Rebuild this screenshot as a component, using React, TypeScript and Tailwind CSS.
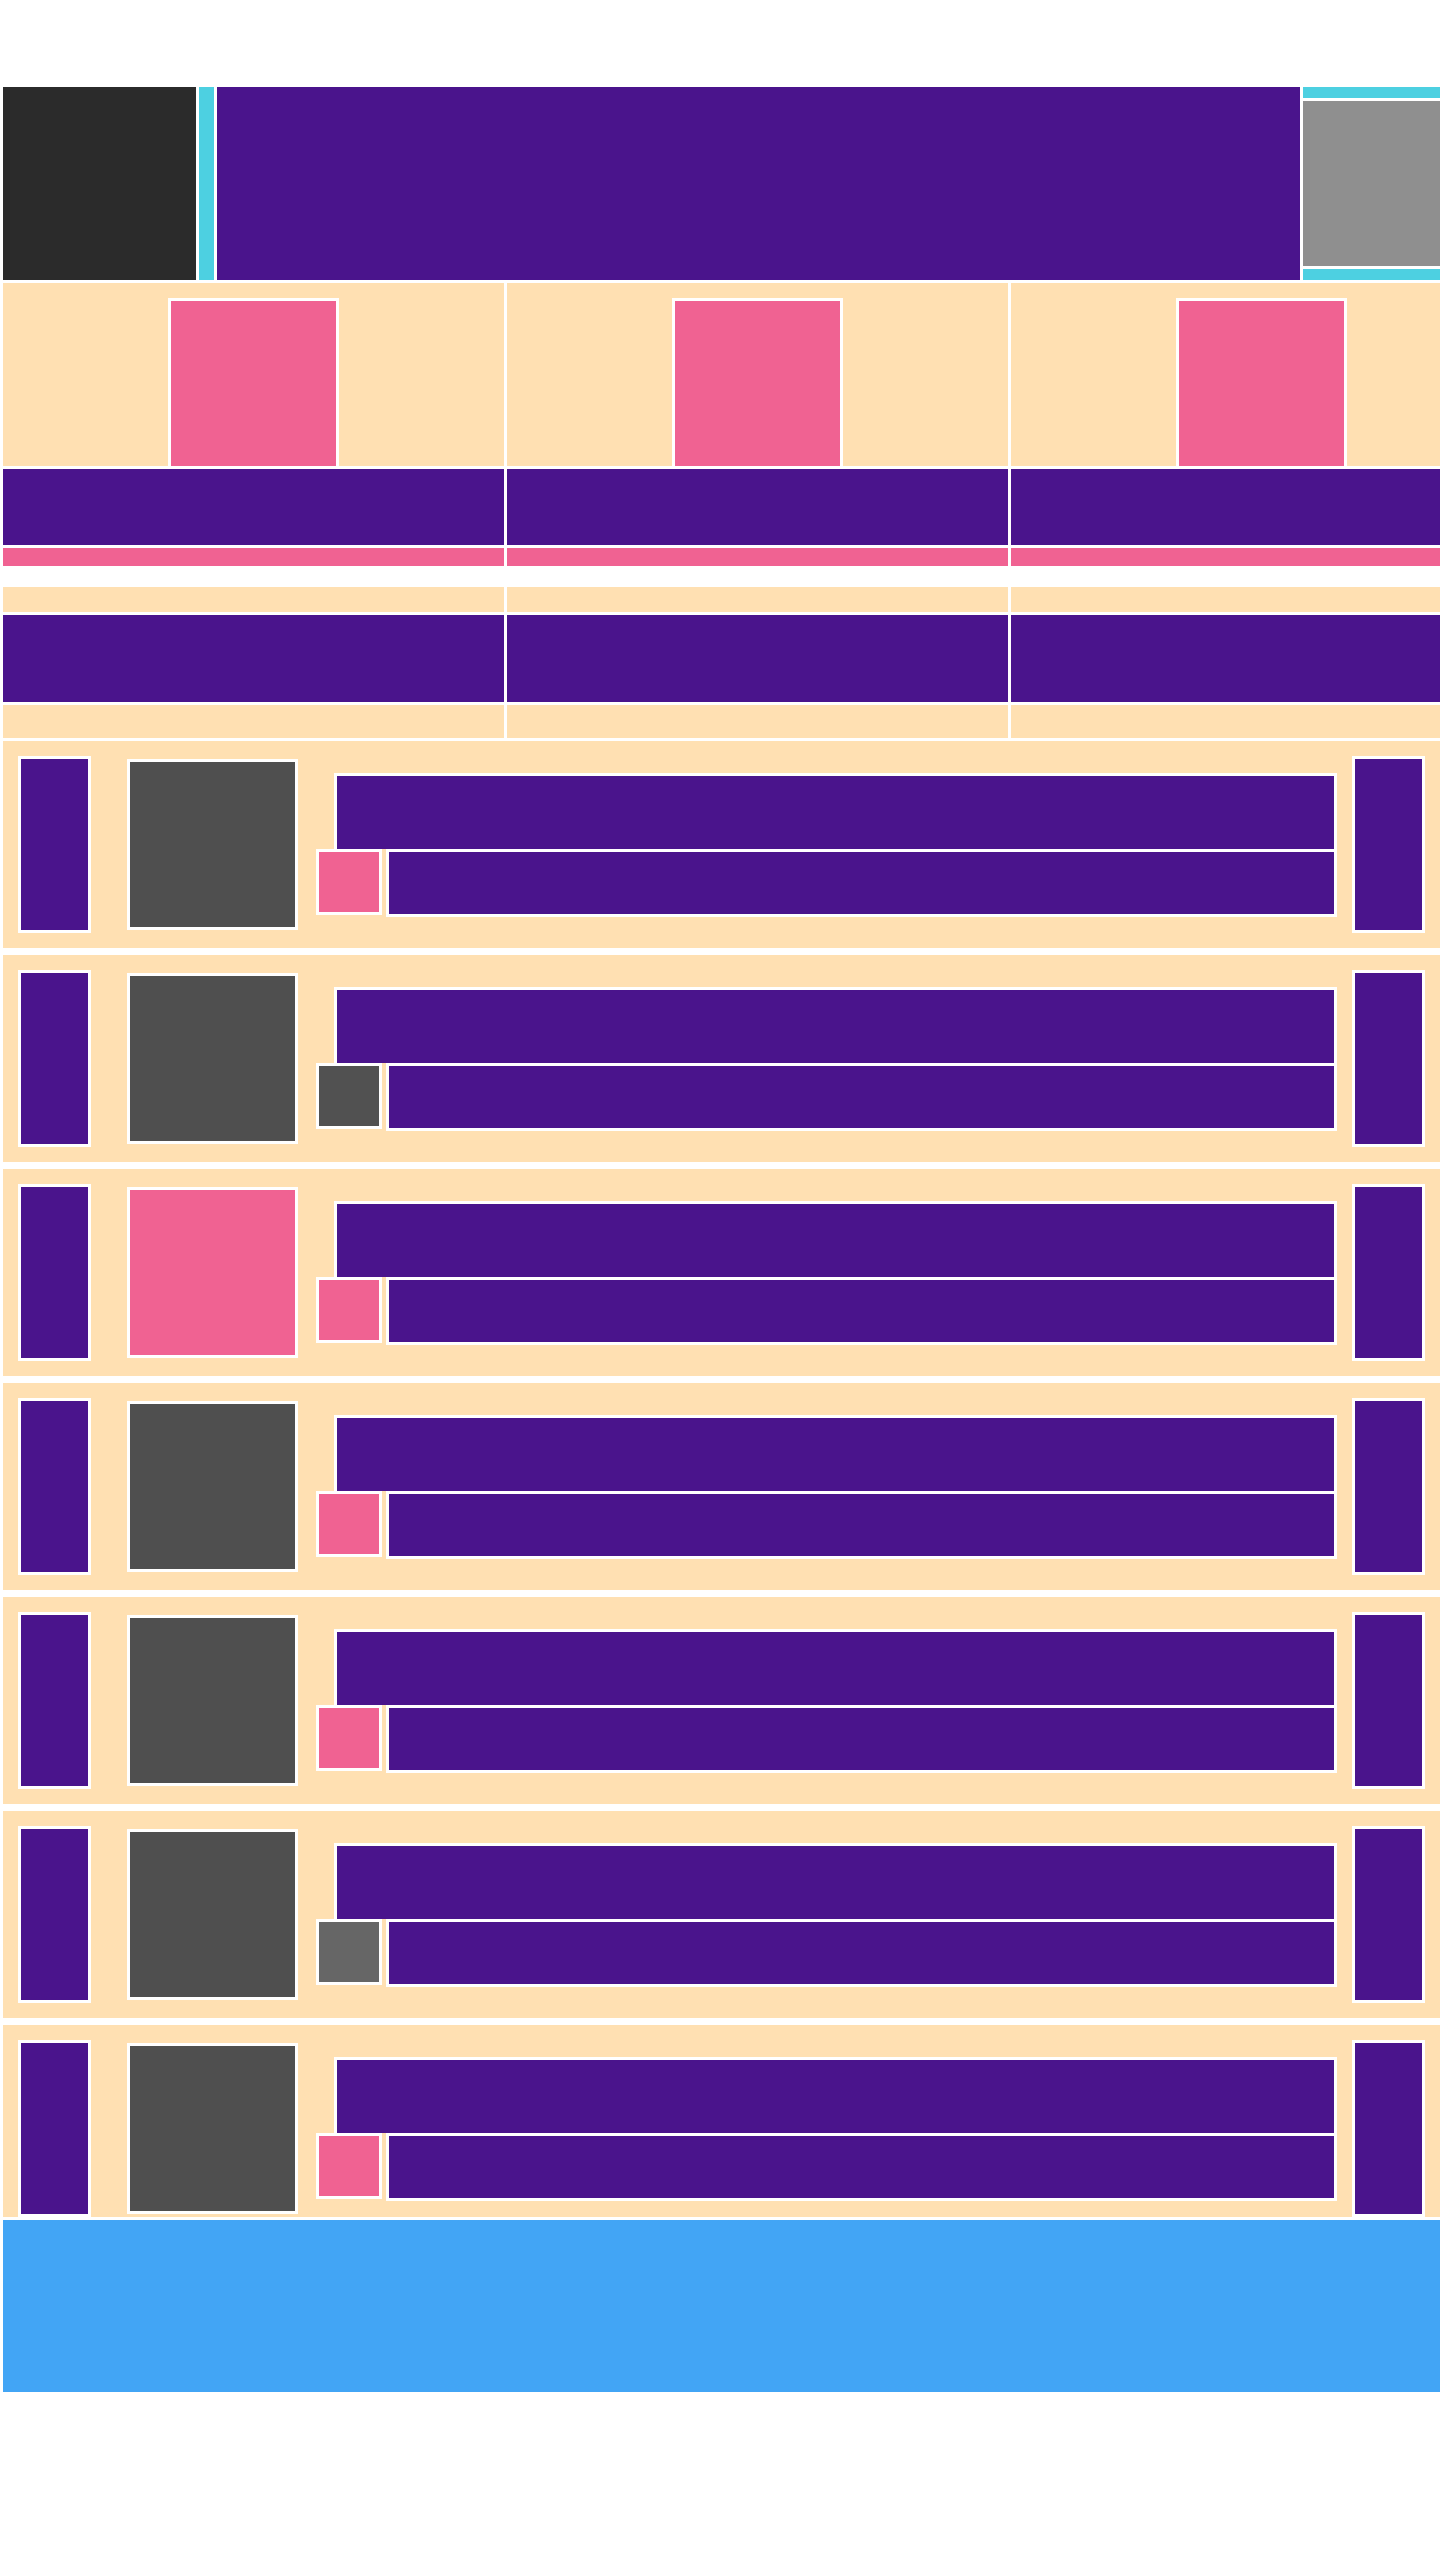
import React from 'react'

interface Item {
  image: string
  thumb: string
}

const items: Item[] = [
  { image: 'bg-[#4f4f4f]', thumb: 'bg-[#f06292]' },
  { image: 'bg-[#4f4f4f]', thumb: 'bg-[#515151]' },
  { image: 'bg-[#f06292]', thumb: 'bg-[#f06292]' },
  { image: 'bg-[#4f4f4f]', thumb: 'bg-[#f06292]' },
  { image: 'bg-[#4f4f4f]', thumb: 'bg-[#f06292]' },
  { image: 'bg-[#4f4f4f]', thumb: 'bg-[#666666]' },
  { image: 'bg-[#4f4f4f]', thumb: 'bg-[#f06292]' },
]

function FeatureColumn() {
  return (
    <div className="flex flex-col">
      {/* Image card */}
      <div className="h-[183px] bg-[#ffe0b2] pt-[15px] flex justify-center">
        <div className="w-[171px] h-[171px] shrink-0 border-[3px] border-white bg-[#f06292]"></div>
      </div>
      <div className="mt-[3px] h-[76px] bg-[#4a148c]"></div>
      <div className="mt-[3px] h-[18px] bg-[#f06292]"></div>

      {/* Stats */}
      <div className="mt-[21px] h-[25px] bg-[#ffe0b2]"></div>
      <div className="mt-[3px] h-[87px] bg-[#4a148c]"></div>
      <div className="mt-[3px] h-[33px] bg-[#ffe0b2]"></div>
    </div>
  )
}

function ListItem({ item }: { item: Item }) {
  return (
    <div className="h-[207px] shrink-0 bg-[#ffe0b2] flex items-center px-[15px]">
      <div className="w-[73px] h-[177px] shrink-0 border-[3px] border-white bg-[#4a148c]"></div>
      <div className={`ml-[36px] w-[171px] h-[171px] shrink-0 border-[3px] border-white ${item.image}`}></div>
      <div className="ml-[18px] w-[1021px] shrink-0 flex flex-col">
        <div className="ml-[18px] h-[76px] border-[3px] border-b-0 border-white bg-[#4a148c]"></div>
        <div className="flex items-start gap-[4px]">
          <div className={`w-[66px] h-[66px] shrink-0 border-[3px] border-white ${item.thumb}`}></div>
          <div className="flex-1 h-[68px] border-[3px] border-white bg-[#4a148c]"></div>
        </div>
      </div>
      <div className="ml-[15px] w-[73px] h-[177px] shrink-0 border-[3px] border-white bg-[#4a148c]"></div>
    </div>
  )
}

export default function App() {
  return (
    <div className="w-full min-h-screen bg-white overflow-hidden">
      <div className="w-[1509px] ml-[3px] pt-[87px] flex flex-col">
        {/* Header */}
        <div className="h-[193px] flex gap-[3px]">
          <div className="w-[193px] bg-[#2b2b2b]"></div>
          <div className="w-[15px] bg-[#4dd0e1]"></div>
          <div className="w-[1083px] bg-[#4a148c]"></div>
          <div className="w-[165px] flex flex-col gap-[3px]">
            <div className="h-[11px] bg-[#4dd0e1]"></div>
            <div className="h-[165px] bg-[#8f8f8f]"></div>
            <div className="h-[11px] bg-[#4dd0e1]"></div>
          </div>
        </div>

        {/* Features */}
        <div className="mt-[3px] grid grid-cols-3 gap-x-[3px]">
          <FeatureColumn />
          <FeatureColumn />
          <FeatureColumn />
        </div>

        {/* List */}
        <div className="mt-[3px] w-[1437px] h-[1476px] overflow-hidden flex flex-col gap-[7px]">
          {items.map((item, index) => (
            <ListItem key={index} item={item} />
          ))}
        </div>

        {/* Footer */}
        <div className="mt-[3px] w-[1437px] h-[172px] bg-[#42a5f5]"></div>
      </div>
    </div>
  )
}
